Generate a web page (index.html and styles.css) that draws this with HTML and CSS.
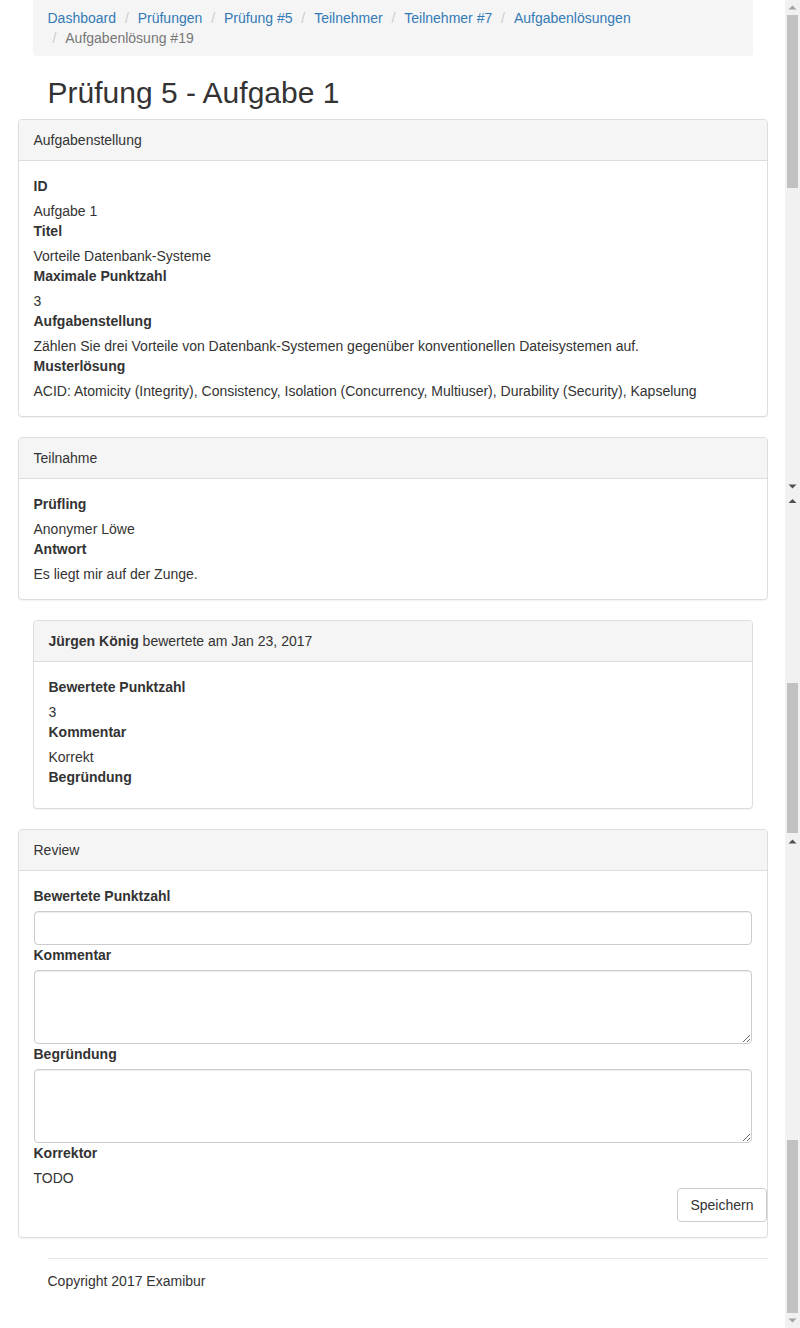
FILE: index.html
```html
<!DOCTYPE html>
<html lang="de">
<head>
<meta charset="utf-8">
<title>Prüfung 5 - Aufgabe 1</title>
<link rel="stylesheet" href="styles.css">
</head>
<body>
<div class="screen">
  <div class="page">
    <div class="container">
      <ol class="breadcrumb">
        <li><a href="#">Dashboard</a></li>
        <li><a href="#">Prüfungen</a></li>
        <li><a href="#">Prüfung #5</a></li>
        <li><a href="#">Teilnehmer</a></li>
        <li><a href="#">Teilnehmer #7</a></li>
        <li><a href="#">Aufgabenlösungen</a></li>
        <li class="active">Aufgabenlösung #19</li>
      </ol>

      <h2 class="title">Prüfung 5 - Aufgabe 1</h2>

      <div class="panel wide">
        <div class="panel-heading">Aufgabenstellung</div>
        <div class="panel-body">
          <div class="field-label">ID</div>
          <div class="field-value">Aufgabe 1</div>
          <div class="field-label">Titel</div>
          <div class="field-value">Vorteile Datenbank-Systeme</div>
          <div class="field-label">Maximale Punktzahl</div>
          <div class="field-value">3</div>
          <div class="field-label">Aufgabenstellung</div>
          <div class="field-value">Zählen Sie drei Vorteile von Datenbank-Systemen gegenüber konventionellen Dateisystemen auf.</div>
          <div class="field-label">Musterlösung</div>
          <div class="field-value">ACID: Atomicity (Integrity), Consistency, Isolation (Concurrency, Multiuser), Durability (Security), Kapselung</div>
        </div>
      </div>

      <div class="panel wide">
        <div class="panel-heading">Teilnahme</div>
        <div class="panel-body">
          <div class="field-label">Prüfling</div>
          <div class="field-value">Anonymer Löwe</div>
          <div class="field-label">Antwort</div>
          <div class="field-value">Es liegt mir auf der Zunge.</div>
        </div>
      </div>

      <div class="panel">
        <div class="panel-heading"><strong>Jürgen König</strong> bewertete am Jan 23, 2017</div>
        <div class="panel-body">
          <div class="field-label">Bewertete Punktzahl</div>
          <div class="field-value">3</div>
          <div class="field-label">Kommentar</div>
          <div class="field-value">Korrekt</div>
          <div class="field-label">Begründung</div>
          <div class="field-value"></div>
        </div>
      </div>

      <form class="panel wide">
        <div class="panel-heading">Review</div>
        <div class="panel-body">
          <label class="field-label" for="points">Bewertete Punktzahl</label>
          <input class="form-control" id="points" type="text">
          <label class="field-label" for="comment">Kommentar</label>
          <textarea class="form-control area" id="comment" rows="3"></textarea>
          <label class="field-label" for="reason">Begründung</label>
          <textarea class="form-control area" id="reason" rows="3"></textarea>
          <div class="field-label">Korrektor</div>
          <div class="field-value">TODO</div>
          <div class="actions">
            <button class="btn" type="button">Speichern</button>
          </div>
        </div>
      </form>

      <footer class="footer">
        <hr class="footer-rule">
        <p class="copyright">Copyright 2017 Examibur</p>
      </footer>
    </div>
  </div>

  <div class="scrollbar">
    <div class="sb-seg seg1">
      <div class="sb-btn"><svg width="15" height="15" viewBox="0 0 15 15"><path class="arr-off" d="M3.5 9.5 L7.5 5.5 L11.5 9.5 Z"/></svg></div>
      <div class="sb-thumb thumb1"></div>
      <div class="sb-fill"></div>
      <div class="sb-btn"><svg width="15" height="15" viewBox="0 0 15 15"><path class="arr-on" d="M3.5 6.5 L7.5 10.5 L11.5 6.5 Z"/></svg></div>
    </div>
    <div class="sb-seg seg2">
      <div class="sb-btn"><svg width="15" height="15" viewBox="0 0 15 15"><path class="arr-on" d="M3.5 10 L7.5 6 L11.5 10 Z"/></svg></div>
      <div class="sb-space space2"></div>
      <div class="sb-thumb thumb2"></div>
    </div>
    <div class="sb-seg seg3">
      <div class="sb-btn"><svg width="15" height="15" viewBox="0 0 15 15"><path class="arr-on" d="M3.5 9.5 L7.5 5.5 L11.5 9.5 Z"/></svg></div>
      <div class="sb-space space3"></div>
      <div class="sb-thumb thumb3"></div>
      <div class="sb-btn"><svg width="15" height="15" viewBox="0 0 15 15"><path class="arr-off" d="M3.5 5.5 L7.5 9.5 L11.5 5.5 Z"/></svg></div>
    </div>
  </div>
</div>
</body>
</html>
```

FILE: styles.css
```css
* {
  box-sizing: border-box;
}

html {
  overflow: hidden;
}

body {
  margin: 0;
  font-family: "Liberation Sans", Arial, Helvetica, sans-serif;
  font-size: 14px;
  line-height: 20px;
  color: #333;
  background: #fff;
}

.screen {
  display: flex;
  width: 800px;
  height: 1328px;
}

.page {
  flex: 0 0 785px;
  width: 785px;
}

.container {
  width: 750px;
  margin: 0 auto;
  padding: 0 15px;
}

/* breadcrumb */
.breadcrumb {
  margin: 0 0 20px;
  padding: 8px 15px;
  list-style: none;
  background: #f5f5f5;
  border-radius: 0 0 4px 4px;
}

.breadcrumb li {
  display: inline-block;
}

.breadcrumb li + li::before {
  content: "/\00a0";
  padding: 0 5px;
  color: #ccc;
}

.breadcrumb a {
  color: #337ab7;
  text-decoration: none;
}

.breadcrumb .active {
  color: #777;
}

.title {
  margin: 20px 15px 10px;
  font-size: 30px;
  line-height: 33px;
  font-weight: 500;
  color: #333;
}

/* panels */
.panel {
  display: block;
  margin: 0 0 20px;
  background: #fff;
  border: 1px solid #ddd;
  border-radius: 4px;
  box-shadow: 0 1px 1px rgba(0, 0, 0, 0.05);
}

.panel.wide {
  margin-left: -15px;
  margin-right: -15px;
}

.panel-heading {
  padding: 10px 15px;
  background: #f5f5f5;
  border-bottom: 1px solid #ddd;
  border-radius: 3px 3px 0 0;
  color: #333;
}

.panel-body {
  padding: 15px;
}

.field-label {
  display: block;
  margin-bottom: 5px;
  font-weight: bold;
}

.field-value:empty {
  height: 1px;
}

.form-control {
  display: block;
  width: 100%;
  height: 34px;
  padding: 6px 12px;
  font: inherit;
  color: #555;
  background: #fff;
  border: 1px solid #ccc;
  border-radius: 4px;
  box-shadow: inset 0 1px 1px rgba(0, 0, 0, 0.075);
  margin: 0;
}

.form-control.area {
  height: 74px;
  resize: vertical;
}

.actions {
  display: flex;
  justify-content: flex-end;
  margin-right: -15px;
}

.btn {
  height: 34px;
  padding: 6px 12px;
  font: inherit;
  color: #333;
  background: #fff;
  border: 1px solid #ccc;
  border-radius: 4px;
  cursor: pointer;
}

/* footer */
.footer {
  margin: 0 -15px 0 15px;
}

.footer-rule {
  margin: 1px 0 12px;
  padding: 0;
  height: 0;
  border: 0;
  border-top: 1px solid #e5e5e5;
}

.copyright {
  margin: 0 0 10px;
}

/* fake scrollbar column */
.scrollbar {
  flex: 0 0 15px;
  width: 15px;
  display: flex;
  flex-direction: column;
  background: #f1f1f1;
}

.sb-seg {
  display: flex;
  flex-direction: column;
}

.seg1 { height: 493px; }
.seg2 { height: 341px; }
.seg3 { height: 494px; }

.sb-btn {
  height: 15px;
  flex: 0 0 15px;
}

.sb-btn svg {
  display: block;
}

.arr-on { fill: #505050; }
.arr-off { fill: #a3a3a3; }

.sb-thumb {
  margin-left: 2px;
  width: 11px;
  background: #c1c1c1;
}

.thumb1 { flex: 0 0 173px; }
.thumb2 { flex: 0 0 150px; }
.thumb3 { flex: 0 0 173px; }

.sb-fill { flex: 1 1 auto; }
.space2 { flex: 0 0 175px; }
.space3 { flex: 0 0 291px; }
```
